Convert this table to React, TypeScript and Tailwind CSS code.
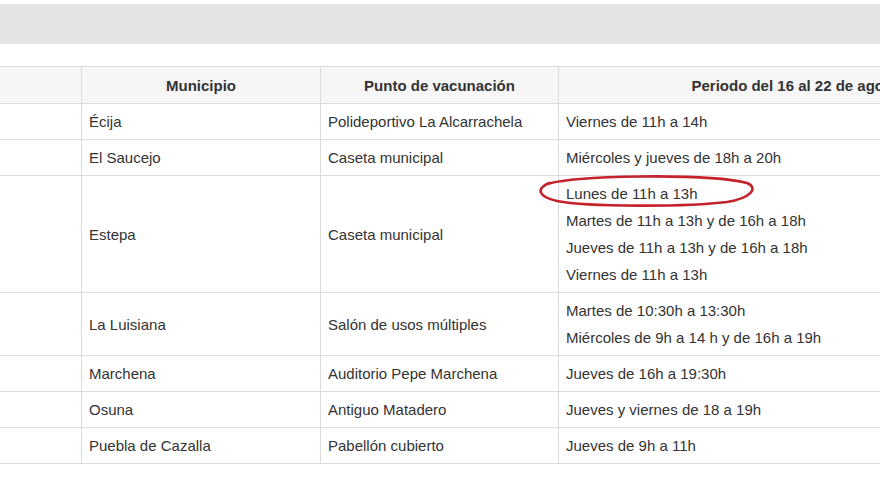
const rows: { municipio: string; punto: string; horario: string[] }[] = [
  { municipio: "Écija", punto: "Polideportivo La Alcarrachela", horario: ["Viernes de 11h a 14h"] },
  { municipio: "El Saucejo", punto: "Caseta municipal", horario: ["Miércoles y jueves de 18h a 20h"] },
  {
    municipio: "Estepa",
    punto: "Caseta municipal",
    horario: [
      "Lunes de 11h a 13h",
      "Martes de 11h a 13h y de 16h a 18h",
      "Jueves de 11h a 13h y de 16h a 18h",
      "Viernes de 11h a 13h",
    ],
  },
  {
    municipio: "La Luisiana",
    punto: "Salón de usos múltiples",
    horario: ["Martes de 10:30h a 13:30h", "Miércoles de 9h a 14 h y de 16h a 19h"],
  },
  { municipio: "Marchena", punto: "Auditorio Pepe Marchena", horario: ["Jueves de 16h a 19:30h"] },
  { municipio: "Osuna", punto: "Antiguo Matadero", horario: ["Jueves y viernes de 18 a 19h"] },
  { municipio: "Puebla de Cazalla", punto: "Pabellón cubierto", horario: ["Jueves de 9h a 11h"] },
];

function Circled({ children }: { children: React.ReactNode }) {
  return (
    <span className="relative inline-block">
      {children}
      <svg
        className="absolute left-[-29px] top-[-8px] h-[34px] w-[219px] overflow-visible pointer-events-none"
        viewBox="0 0 219 34"
      >
        <path
          d="M8 13 C 30 3, 170 1, 210 11 C 222 16, 214 26, 190 30 C 150 35, 50 35, 20 29 C 2 25, -2 17, 12 11"
          fill="none"
          stroke="#c4232b"
          strokeWidth="2.6"
          strokeLinecap="round"
        />
      </svg>
    </span>
  );
}

export default function App() {
  const cell = "border border-[#dcdcdc] px-[7px] py-[4px] align-middle";
  return (
    <div
      className="h-[495px] w-[880px] overflow-hidden bg-white text-[15px] leading-[27px] text-[#333]"
      style={{ fontFamily: '"Liberation Sans", Arial, sans-serif' }}
    >
      <div className="mt-[4px] h-[40px] bg-[#e4e4e4]" />
      <div className="mt-[22px] ml-[-20px]">
        <table className="w-[1060px] table-fixed border-collapse">
          <colgroup>
            <col className="w-[101px]" />
            <col className="w-[239px]" />
            <col className="w-[238px]" />
            <col />
          </colgroup>
          <thead>
            <tr className="bg-[#f6f6f6]">
              <th className={`${cell} h-[37px]`} />
              <th className={`${cell} text-center font-bold`}>Municipio</th>
              <th className={`${cell} text-center font-bold`}>Punto de vacunación</th>
              <th className={`${cell} text-center font-bold`}>Periodo del 16 al 22 de agosto</th>
            </tr>
          </thead>
          <tbody>
            {rows.map((r) => (
              <tr key={r.municipio}>
                <td className={cell} />
                <td className={cell}>{r.municipio}</td>
                <td className={cell}>{r.punto}</td>
                <td className={cell}>
                  {r.horario.map((h) => (
                    <div key={h}>{h === "Lunes de 11h a 13h" ? <Circled>{h}</Circled> : h}</div>
                  ))}
                </td>
              </tr>
            ))}
          </tbody>
        </table>
      </div>
    </div>
  );
}
